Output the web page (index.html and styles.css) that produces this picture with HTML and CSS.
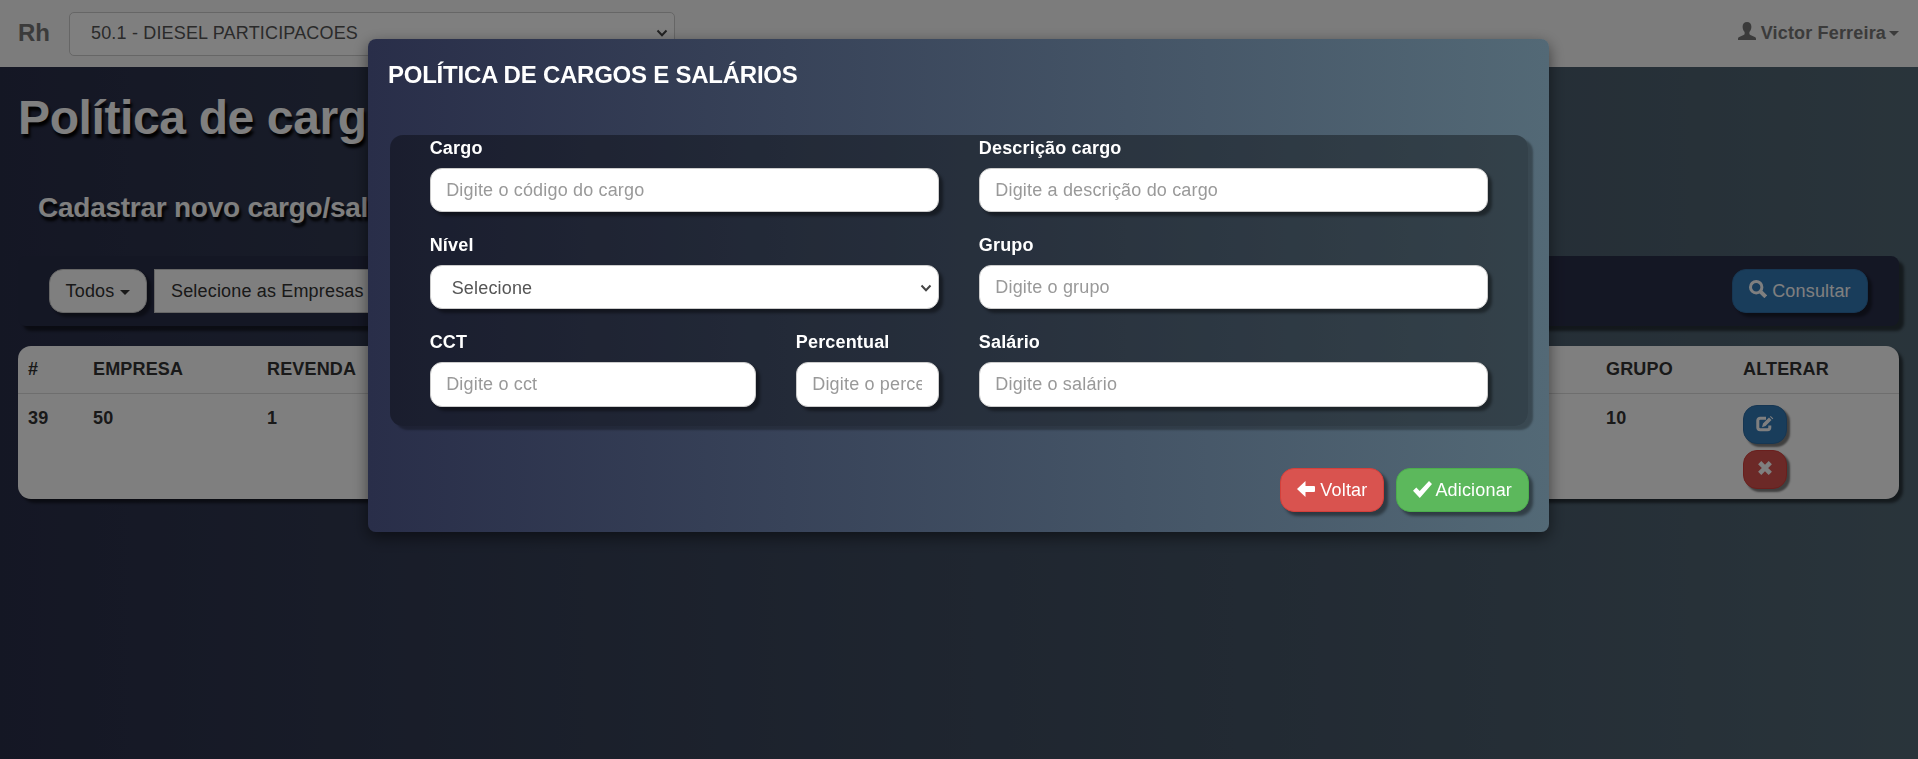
FILE: index.html
```html
<!DOCTYPE html>
<html lang="pt-BR">
<head>
<meta charset="utf-8">
<title>Política de cargos e salários</title>
<link rel="stylesheet" href="styles.css">
</head>
<body>
<div class="page">
  <nav class="navbar">
    <a class="brand">Rh</a>
    <div class="select company-select"><span>50.1 - DIESEL PARTICIPACOES</span>
      <svg class="chevron" viewBox="0 0 12 8"><path d="M1.5 1.5 6 6.2 10.500 1.5"/></svg>
    </div>
    <div class="user">
      <svg class="icon-user" viewBox="0 0 18 18"><path d="M9 0C6.300 0 4.600 1.900 4.600 4.800c0 2 .8 4.200 2 5.300v1.700c0 .7-.4 1-1 1.300L1.200 15C.4 15.400 0 15.900 0 16.800V18h18v-1.200c0-.9-.4-1.400-1.200-1.800l-4.400-1.900c-.6-.3-1-.6-1-1.300v-1.700c1.200-1.100 2-3.300 2-5.300C13.400 1.900 11.700 0 9 0z"/></svg>
      <span>Victor Ferreira</span><i class="caret"></i>
    </div>
  </nav>
  <h1 class="page-title">Política de cargos e salários</h1>
  <h2 class="page-subtitle">Cadastrar novo cargo/salário</h2>
  <div class="filters">
    <button class="btn btn-default">Todos <i class="caret"></i></button>
    <div class="companies">Selecione as Empresas</div>
    <button class="btn btn-primary consult">
      <svg class="icon-search" viewBox="0 0 18 18"><circle cx="7.200" cy="7.200" r="5.700"/><path d="M11.300 11.300 16.800 16.800"/></svg>
      <span>Consultar</span>
    </button>
  </div>
  <div class="table">
    <div class="row head"><span>#</span><span>EMPRESA</span><span>REVENDA</span><span></span><span>GRUPO</span><span>ALTERAR</span></div>
    <div class="row body"><span>39</span><span>50</span><span>1</span><span></span><span>10</span>
      <span class="actions">
        <button class="btn-sm btn-primary"><svg class="icon-edit" viewBox="0 0 18 16"><path class="line" d="M10 2.300H4.200C2.800 2.300 1.800 3.100 1.800 4.500v7.100c0 1.400 1 2.200 2.400 2.200h7.400c1.400 0 2.200-.8 2.200-2.200V9.500"/><path d="M6 11.200l1-3.600 6-6 2.500 2.500-6 6zM14 .7l.7-.7 2.600 2.500-.8.8z"/></svg></button>
        <button class="btn-sm btn-danger"><svg class="icon-remove" viewBox="0 0 14 14"><path d="M1.700 1.700l10.600 10.600M12.300 1.700 1.700 12.300"/></svg></button>
      </span>
    </div>
  </div>
</div>
<div class="backdrop">
  <div class="modal">
    <h3 class="modal-title">POLÍTICA DE CARGOS E SALÁRIOS</h3>
    <div class="panel">
      <label class="field half">Cargo<input placeholder="Digite o código do cargo"></label>
      <label class="field half">Descrição cargo<input placeholder="Digite a descrição do cargo"></label>
      <label class="field half">Nível
        <div class="select"><span>Selecione</span><svg class="chevron" viewBox="0 0 12 8"><path d="M1.500 1.500 6 6.200 10.500 1.500"/></svg></div>
      </label>
      <label class="field half">Grupo<input placeholder="Digite o grupo"></label>
      <label class="field third">CCT<input placeholder="Digite o cct"></label>
      <label class="field sixth">Percentual<input placeholder="Digite o percentual"></label>
      <label class="field half last">Salário<input placeholder="Digite o salário"></label>
    </div>
    <div class="modal-footer">
      <button class="btn btn-danger"><svg class="icon-back" viewBox="0 0 18 16"><path d="M0 8 8.500 0v5H17q1 0 1 1v4q0 1-1 1H8.500v5z"/></svg><span>Voltar</span></button>
      <button class="btn btn-success"><svg class="icon-ok" viewBox="0 0 19 17"><path d="M0 9.800 3.300 6.500 6.700 9.900 16 0 19 3 6.800 17z"/></svg><span>Adicionar</span></button>
    </div>
  </div>
</div>
</body>
</html>
```
FILE: styles.css
```css
* { box-sizing: border-box; }
body {
  margin: 0;
  height: 759px;
  overflow: hidden;
  font: 18px/26px "Liberation Sans", Arial, sans-serif;
  letter-spacing: .17px;
  color: #333;
  background: linear-gradient(to right, #292e49, #536976);
}
svg { fill: currentColor; flex: none; }
.page { height: 759px; }
.navbar {
  height: 67px;
  background: #f8f8f8;
  display: flex;
  align-items: center;
  padding: 0 19px 1px 18px;
  color: #777;
  font-weight: bold;
}
.brand { width: 51px; font-size: 24px; letter-spacing: 0; }
.select {
  display: flex;
  align-items: center;
  justify-content: space-between;
  height: 44px;
  padding: 0 6px 0 21px;
  border: 1px solid #ccc;
  border-radius: 12px;
  background: #fff;
  color: #555;
  font-weight: normal;
}
.company-select { width: 606px; height: 44px; margin-top: 1px; padding-bottom: 1px; border-radius: 5px; }
.chevron { width: 12px; height: 8px; fill: none; stroke: #444; stroke-width: 2; }
.user { margin-left: auto; display: flex; align-items: center; }
.icon-user { width: 18px; height: 18px; margin: -4px 5px 0 0; }
.caret {
  display: inline-block;
  border: 5px solid transparent;
  border-top-color: currentColor;
  border-bottom: 0;
  vertical-align: middle;
  margin-left: 3px;
}
.page-title {
  margin: 24px 18px 0;
  font-size: 48px;
  line-height: 53px;
  letter-spacing: -.38px;
  color: #fff;
  text-shadow: 2px 4px 3px #000;
}
.page-subtitle {
  margin: 48px 38px 0;
  font-size: 28px;
  line-height: 31px;
  letter-spacing: -.25px;
  color: #fff;
  text-shadow: 2px 4px 3px #000;
}
.filters {
  margin: 33px 19px 0 18px;
  height: 70px;
  padding: 0 31px;
  display: flex;
  align-items: center;
  background: #292e49;
  border-radius: 8px;
  box-shadow: 5px 5px 3px rgba(0, 0, 0, .5);
}
.btn, .btn-sm {
  font: inherit;
  letter-spacing: inherit;
  display: inline-flex;
  align-items: center;
  justify-content: center;
  height: 44px;
  padding: 0 16px;
  border: 1px solid #ccc;
  border-radius: 14px;
  box-shadow: 4px 4px 3px rgba(0, 0, 0, .4);
  color: #fff;
}
.btn-default { width: 98px; background: #fff; color: #333; }
.btn-default .caret { margin: 2px 0 0 6px; }
.btn-primary { background: #337ab7; border-color: #2e6da4; }
.btn-danger { background: #d9534f; border-color: #d43f3a; }
.btn-success { background: #5cb85c; border-color: #4cae4c; }
.companies {
  width: 400px;
  height: 44px;
  margin-left: 7px;
  padding: 8px 16px;
  border: 1px solid #ccc;
  background: #fff;
}
.consult { margin-left: auto; width: 136px; }
.icon-search { width: 18px; height: 18px; margin: -4px 5px 0 0; fill: none; stroke: currentColor; stroke-width: 3; }
.icon-search path { stroke-width: 4; }
.table {
  margin: 20px 19px 0 18px;
  height: 153px;
  background: #fff;
  border-radius: 13px;
  box-shadow: 4px 4px 3px rgba(0, 0, 0, .5);
  font-weight: bold;
}
.row {
  display: grid;
  grid-template-columns: 65px 174px 500px 839px 137px 1fr;
  padding: 10px 0 0 10px;
}
.row.head { height: 48px; border-bottom: 1px solid #ddd; }
.row.body { padding-top: 11px; }
.actions { display: flex; flex-direction: column; gap: 6px; }
.btn-sm { width: 44px; height: 39px; padding: 0; box-shadow: 3px 3px 2px rgba(0, 0, 0, .5); }
.icon-edit { width: 18px; height: 16px; margin-top: -2px; }
.icon-edit .line { fill: none; stroke: currentColor; stroke-width: 3; }
.icon-remove { width: 14px; height: 14px; margin-top: -4px; stroke: currentColor; stroke-width: 4.500; overflow: visible; }
.backdrop {
  position: fixed;
  inset: 0;
  background: rgba(0, 0, 0, .5);
  padding-top: 39px;
}
.modal {
  width: 1181px;
  height: 493px;
  margin-left: 368px;
  padding: 20px 20px 20px 22px;
  border-radius: 8px;
  background: linear-gradient(to right, #292e49, #536976);
  box-shadow: 0 5px 15px rgba(0, 0, 0, .5);
}
.modal-title { margin: 0 0 44px -2px; font-size: 24px; line-height: 32px; letter-spacing: -.24px; color: #fff; }
.panel {
  width: 1138px;
  height: 291px;
  padding: 0 20px 0 19.700px;
  display: flex;
  flex-wrap: wrap;
  align-content: flex-start;
  border-radius: 13px;
  background: rgba(0, 0, 0, .37);
  box-shadow: 5px 4px 2px rgba(0, 0, 0, .3);
}
.field { height: 97px; padding: 0 20px; color: #fff; font-weight: bold; }
.half { width: 50%; }
.third { width: 33.333%; }
.sixth { width: 16.666%; }
.field input, .field .select {
  display: flex;
  width: 100%;
  height: 44px;
  margin-top: 7px;
  border: 1px solid #ccc;
  border-radius: 12px;
  box-shadow: 4px 4px 3px rgba(0, 0, 0, .4);
}
.field .select { padding-top: 1px; }
.third input, .sixth input, .last input { height: 45px; }
.field input { padding: 0 15.500px; font: inherit; font-weight: normal; letter-spacing: inherit; background: #fff; }
.field input::placeholder { color: #999; opacity: 1; }
.modal-footer { display: flex; justify-content: flex-end; gap: 12px; margin-top: 42px; }
.icon-back { width: 18px; height: 16px; margin: -2px 5px 0 0; }
.icon-ok { width: 19px; height: 17px; margin: -2px 3px 0 0; }
```
